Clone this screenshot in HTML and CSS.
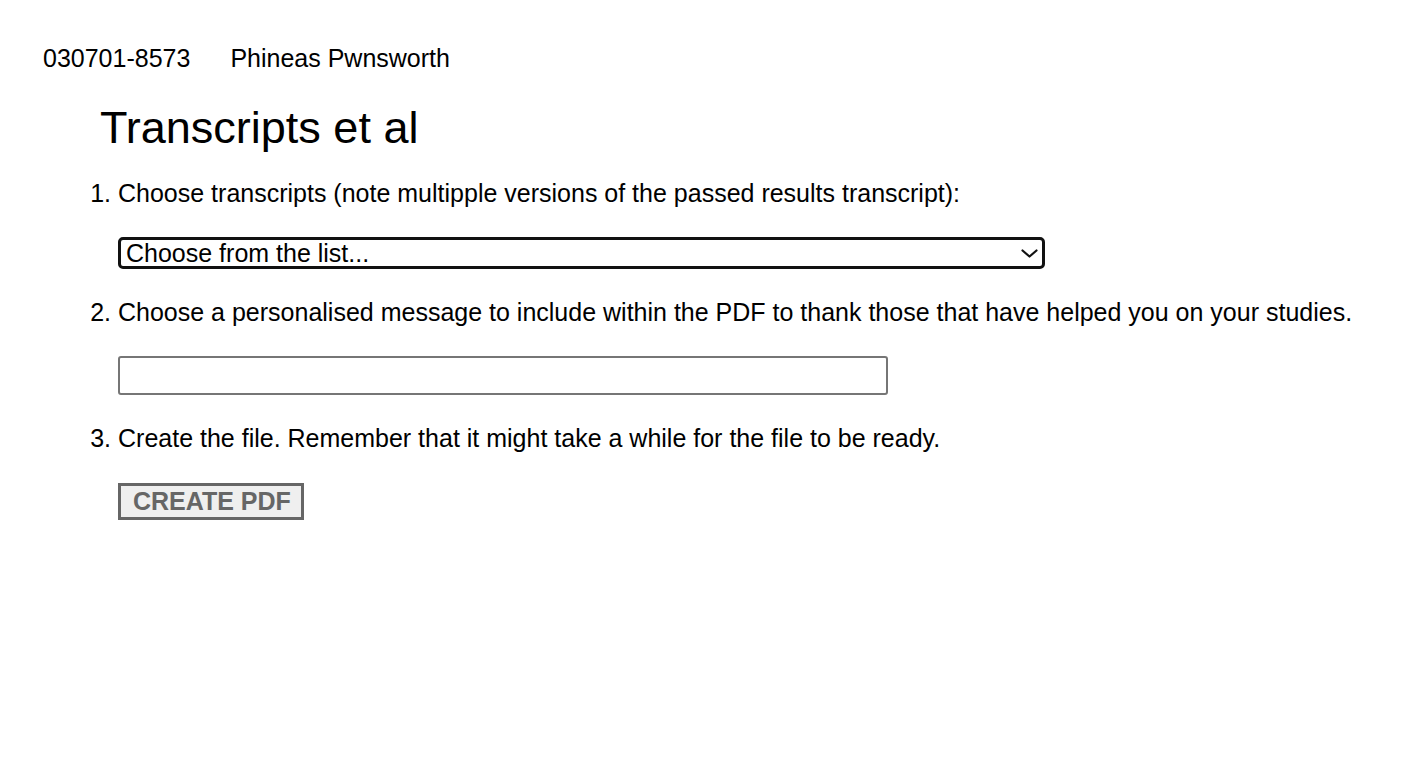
FILE: index.html
```html
<!DOCTYPE html>
<html lang="en">
<head>
<meta charset="utf-8">
<title>Transcripts et al</title>
<link rel="stylesheet" href="styles.css">
</head>
<body>
<header class="user-bar">
  <span class="user-id">030701-8573</span>
  <span class="user-name">Phineas Pwnsworth</span>
</header>
<main class="content">
  <h1 class="title">Transcripts et al</h1>
  <ol class="steps">
    <li class="step">
      <p class="step-text">Choose transcripts (note multipple versions of the passed results transcript):</p>
      <div class="select-wrap">
        <select class="select">
          <option>Choose from the list...</option>
        </select>
        <svg class="chevron" width="17" height="9" viewBox="0 0 17 9" aria-hidden="true"><path d="M1.5 1.5 L8.5 7.5 L15.5 1.5" fill="none" stroke="#111" stroke-width="2.2" stroke-linecap="round" stroke-linejoin="round"/></svg>
      </div>
    </li>
    <li class="step">
      <p class="step-text">Choose a personalised message to include within the PDF to thank those that have helped you on your studies.</p>
      <input class="text-input" type="text">
    </li>
    <li class="step">
      <p class="step-text">Create the file. Remember that it might take a while for the file to be ready.</p>
      <button class="btn" type="button">CREATE PDF</button>
    </li>
  </ol>
</main>
</body>
</html>
```

FILE: styles.css
```css
html, body {
  margin: 0;
  padding: 0;
  background: #fff;
}
body {
  font-family: "Liberation Sans", Arial, sans-serif;
  font-size: 25px;
  color: #000;
}
.user-bar {
  display: flex;
  gap: 40px;
  padding: 44px 0 0 43px;
  line-height: 29px;
}
.content {
  padding: 0;
}
.title {
  font-size: 45px;
  font-weight: 400;
  line-height: 52px;
  margin: 29px 0 0 100px;
}
.steps {
  margin: 25px 0 0 0;
  padding: 0 0 0 118px;
  display: flex;
  flex-direction: column;
  gap: 0;
}
.step {
  line-height: 29px;
}
.step-text {
  margin: 0;
}
.select-wrap {
  position: relative;
  width: 927px;
  margin: 29px 0 29px 0;
}
.select {
  display: block;
  appearance: none;
  -webkit-appearance: none;
  width: 927px;
  height: 32px;
  box-sizing: border-box;
  border: 3px solid #111;
  border-radius: 5px;
  background: #fff;
  font-family: "Liberation Sans", Arial, sans-serif;
  font-size: 25px;
  color: #000;
  padding: 0 30px 0 5px;
  line-height: 26px;
  margin: 0;
}
.chevron {
  position: absolute;
  right: 7px;
  top: 12px;
}
.text-input {
  display: block;
  box-sizing: border-box;
  width: 770px;
  height: 39px;
  border: 2px solid #767676;
  border-radius: 3px;
  margin: 29px 0 29px 0;
  padding: 0 6px;
  font-family: "Liberation Sans", Arial, sans-serif;
  font-size: 25px;
  background: #fff;
}
.btn {
  display: block;
  box-sizing: border-box;
  height: 37px;
  margin: 30px 0 0 0;
  padding: 0 10px 1px 12px;
  border: 3px solid #666;
  border-radius: 0;
  background: #efefef;
  color: #666;
  font-family: "Liberation Sans", Arial, sans-serif;
  font-weight: 700;
  font-size: 25px;
  line-height: 29px;
  white-space: nowrap;
}
```
